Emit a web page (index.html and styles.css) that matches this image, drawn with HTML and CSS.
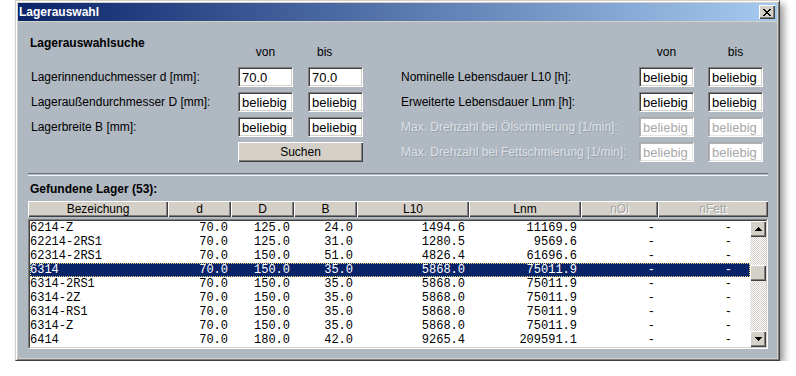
FILE: index.html
```html
<!DOCTYPE html>
<html lang="de">
<head>
    <meta charset="UTF-8">
    <title>Lagerauswahl</title>
    <link rel="stylesheet" href="styles.css">
</head>
<body>

<div class="window">
    <div class="titlebar">
        <span class="title">Lagerauswahl</span>
        <button class="close" title="Schließen">
            <svg width="8" height="7" viewBox="0 0 8 7"><path d="M0 0h2v1H0zM6 0h2v1H6zM1 1h2v1H1zM5 1h2v1H5zM2 2h4v1H2zM3 3h2v1H3zM2 4h4v1H2zM1 5h2v1H1zM5 5h2v1H5zM0 6h2v1H0zM6 6h2v1H6z" fill="#000"/></svg>
        </button>
    </div>

    <div class="content">
        <div class="search">
            <div class="pane pane-left">
                <div class="pane-head">
                    <h2 class="heading">Lagerauswahlsuche</h2>
                    <span class="colhead col-von">von</span>
                    <span class="colhead col-bis shift">bis</span>
                </div>
                <div class="pane-row">
                    <label>Lagerinnenduchmesser d [mm]:</label>
                    <input class="field" type="text" value="70.0">
                    <input class="field" type="text" value="70.0">
                </div>
                <div class="pane-row">
                    <label>Lageraußendurchmesser D [mm]:</label>
                    <input class="field" type="text" value="beliebig">
                    <input class="field" type="text" value="beliebig">
                </div>
                <div class="pane-row">
                    <label>Lagerbreite B [mm]:</label>
                    <input class="field" type="text" value="beliebig">
                    <input class="field" type="text" value="beliebig">
                </div>
                <div class="pane-row">
                    <span></span>
                    <button class="btn search-btn">Suchen</button>
                </div>
            </div>

            <div class="pane pane-right">
                <div class="pane-head">
                    <span class="colhead col-von">von</span>
                    <span class="colhead col-bis">bis</span>
                </div>
                <div class="pane-row">
                    <label>Nominelle Lebensdauer L10 [h]:</label>
                    <input class="field" type="text" value="beliebig">
                    <input class="field" type="text" value="beliebig">
                </div>
                <div class="pane-row">
                    <label>Erweiterte Lebensdauer Lnm [h]:</label>
                    <input class="field" type="text" value="beliebig">
                    <input class="field" type="text" value="beliebig">
                </div>
                <div class="pane-row disabled">
                    <label>Max. Drehzahl bei Ölschmierung [1/min]:</label>
                    <input class="field" type="text" value="beliebig" disabled>
                    <input class="field" type="text" value="beliebig" disabled>
                </div>
                <div class="pane-row disabled">
                    <label>Max. Drehzahl bei Fettschmierung [1/min]:</label>
                    <input class="field" type="text" value="beliebig" disabled>
                    <input class="field" type="text" value="beliebig" disabled>
                </div>
            </div>
        </div>

        <div class="separator"></div>

        <h2 class="heading result-heading">Gefundene Lager (53):</h2>

        <div class="table">
            <div class="thead">
                <div class="th">Bezeichung</div>
                <div class="th">d</div>
                <div class="th">D</div>
                <div class="th">B</div>
                <div class="th">L10</div>
                <div class="th">Lnm</div>
                <div class="th off">nÖl</div>
                <div class="th off">nFett</div>
            </div>
            <div class="list">
                <div class="list-inner">
                    <div class="rows">
                        <div class="tr"><span>6214-Z</span><span>70.0</span><span>125.0</span><span>24.0</span><span>1494.6</span><span>11169.9</span><span>-</span><span>-</span></div>
                        <div class="tr"><span>62214-2RS1</span><span>70.0</span><span>125.0</span><span>31.0</span><span>1280.5</span><span>9569.6</span><span>-</span><span>-</span></div>
                        <div class="tr"><span>62314-2RS1</span><span>70.0</span><span>150.0</span><span>51.0</span><span>4826.4</span><span>61696.6</span><span>-</span><span>-</span></div>
                        <div class="tr selected"><span>6314</span><span>70.0</span><span>150.0</span><span>35.0</span><span>5868.0</span><span>75011.9</span><span>-</span><span>-</span></div>
                        <div class="tr"><span>6314-2RS1</span><span>70.0</span><span>150.0</span><span>35.0</span><span>5868.0</span><span>75011.9</span><span>-</span><span>-</span></div>
                        <div class="tr"><span>6314-2Z</span><span>70.0</span><span>150.0</span><span>35.0</span><span>5868.0</span><span>75011.9</span><span>-</span><span>-</span></div>
                        <div class="tr"><span>6314-RS1</span><span>70.0</span><span>150.0</span><span>35.0</span><span>5868.0</span><span>75011.9</span><span>-</span><span>-</span></div>
                        <div class="tr"><span>6314-Z</span><span>70.0</span><span>150.0</span><span>35.0</span><span>5868.0</span><span>75011.9</span><span>-</span><span>-</span></div>
                        <div class="tr"><span>6414</span><span>70.0</span><span>180.0</span><span>42.0</span><span>9265.4</span><span>209591.1</span><span>-</span><span>-</span></div>
                    </div>
                    <div class="scrollbar">
                        <div class="sb-btn">
                            <svg width="7" height="4" viewBox="0 0 7 4"><path d="M3 0h1v1H3zM2 1h3v1H2zM1 2h5v1H1zM0 3h7v1H0z" fill="#000"/></svg>
                        </div>
                        <div class="sb-track sb-track-top"></div>
                        <div class="sb-thumb"></div>
                        <div class="sb-track sb-track-rest"></div>
                        <div class="sb-btn">
                            <svg width="7" height="4" viewBox="0 0 7 4"><path d="M0 0h7v1H0zM1 1h5v1H1zM2 2h3v1H2zM3 3h1v1H3z" fill="#000"/></svg>
                        </div>
                    </div>
                </div>
            </div>
        </div>
    </div>
</div>

</body>
</html>
```

FILE: styles.css
```css
body {
    margin: 0;
    background-color: #ffffff;
    font-family: 'Liberation Sans', Arial, sans-serif;
    font-size: 12px;
    color: #000;
}
.window {
    width: 765px;
    height: 361px;
    margin-left: 15px;
    box-sizing: border-box;
    border: 1px solid;
    border-color: #d4d0c8 #404040 #404040 #d4d0c8;
    background-color: #d4d0c8;
    box-shadow: inset 1px 1px #ffffff, inset -1px -1px #808080, 4px 4px 7px rgba(0, 0, 0, 0.4);
    padding: 2px;
    display: flex;
    flex-direction: column;
}
.titlebar {
    height: 18px;
    flex-shrink: 0;
    display: flex;
    align-items: center;
    justify-content: space-between;
    padding: 0 2px 0 1px;
    background: linear-gradient(to right, #0a246a, #a6caf0);
    margin-bottom: 1px;
}
.title {
    color: #ffffff;
    font-weight: bold;
    font-size: 12px;
}
.close {
    width: 16px;
    height: 14px;
    padding: 0;
    border: none;
    background-color: #d4d0c8;
    box-shadow: inset 1px 1px #ffffff, inset -1px -1px #404040, inset -2px -2px #808080;
    display: flex;
    align-items: center;
    justify-content: center;
}
.content {
    flex: 1;
    background-color: #b0b8c2;
    padding: 14px 9px 0 10px;
}

/* search area */
.search {
    display: flex;
    gap: 38px;
    padding-left: 3px;
}
.pane {
    display: flex;
    flex-direction: column;
    gap: 5px;
}
.pane-left {
    --cols: 192px 55px 55px;
    --gap: 15px;
}
.pane-right {
    --cols: 224px 55px 55px;
    --gap: 14px;
}
.pane-head, .pane-row {
    display: grid;
    grid-template-columns: var(--cols);
    column-gap: var(--gap);
}
.pane-head {
    height: 26px;
}
.pane-row {
    height: 20px;
    align-items: center;
}
.heading {
    margin: 0;
    font-size: 12px;
    font-weight: bold;
    line-height: 14px;
}
.pane-head .heading {
    grid-column: 1;
    margin-left: -1px;
    white-space: nowrap;
}
.colhead {
    grid-row: 1;
    align-self: end;
    margin-bottom: 3px;
    line-height: 14px;
    text-align: center;
}
.col-von {
    grid-column: 2;
}
.col-bis {
    grid-column: 3;
}
.colhead.shift {
    text-align: left;
    padding-left: 9px;
}
label {
    white-space: nowrap;
}
.field {
    width: 55px;
    height: 20px;
    box-sizing: border-box;
    margin: 0;
    padding: 0 0 0 3px;
    font-family: 'Liberation Sans', Arial, sans-serif;
    font-size: 13px;
    color: #000;
    background-color: #ffffff;
    border: 1px solid;
    border-color: #808080 #ffffff #ffffff #808080;
    box-shadow: inset 1px 1px #404040, inset -1px -1px #d4d0c8;
    outline: none;
}
.disabled label {
    color: #dde1e5;
    text-shadow: 1px 1px 0 rgba(130, 138, 148, 0.55);
}
.field:disabled {
    color: #a8a8a8;
    border-color: #a4a8ad #ffffff #ffffff #a4a8ad;
    box-shadow: inset 1px 1px #b4b4b4, inset -1px -1px #e4e4e4;
}
.btn {
    font-family: 'Liberation Sans', Arial, sans-serif;
    font-size: 12px;
    color: #000;
    background-color: #d4d0c8;
    border: none;
    padding: 0;
    box-shadow: inset 1px 1px #ffffff, inset -1px -1px #404040, inset -2px -2px #808080;
}
.search-btn {
    grid-column: 2 / 4;
    height: 20px;
}

.separator {
    margin-top: 11px;
    height: 1px;
    border-top: 1px solid #6e747b;
    border-bottom: 1px solid #f2f4f6;
}
.result-heading {
    margin: 6px 0 5px 2px;
}

/* result table */
.table {
    width: 740px;
}
.thead {
    display: grid;
    grid-template-columns: 140px 63px 63px 63px 112px 112px 77px 110px;
    height: 16px;
}
.th {
    background-color: #d4d0c8;
    box-shadow: inset 1px 1px #ffffff, inset -1px -1px #404040, inset -2px -2px #808080;
    text-align: center;
    line-height: 16px;
}
.th.off {
    color: #a4a4a4;
    text-shadow: 1px 1px 0 #ffffff;
}
.list {
    margin-top: 2px;
    border: 1px solid;
    border-color: #808080 #ffffff #ffffff #808080;
}
.list-inner {
    display: flex;
    border: 1px solid;
    border-color: #404040 #d4d0c8 #d4d0c8 #404040;
    background-color: #ffffff;
}
.rows {
    width: 720px;
}
.tr {
    display: grid;
    grid-template-columns: 138px 63px 63px 63px 112px 112px 77px 92px;
    height: 14px;
    line-height: 14px;
    font-family: 'Liberation Mono', 'Courier New', monospace;
    font-size: 12px;
    white-space: pre;
}
.tr span {
    text-align: right;
    padding-right: 4px;
}
.tr span:first-child {
    text-align: left;
    padding-left: 0;
}
.tr span:nth-child(2), .tr span:nth-child(7) {
    padding-right: 3px;
}
.tr span:nth-child(8) {
    padding-right: 18px;
}
.tr.selected {
    background-color: #0a246a;
    color: #ffffff;
    outline: 1px dotted #e8dc78;
    outline-offset: -1px;
}

.scrollbar {
    width: 16px;
    display: flex;
    flex-direction: column;
}
.sb-btn, .sb-thumb {
    height: 16px;
    flex-shrink: 0;
    background-color: #d4d0c8;
    box-shadow: inset 1px 1px #ffffff, inset -1px -1px #404040, inset -2px -2px #808080;
    display: flex;
    align-items: center;
    justify-content: center;
}
.sb-track {
    background: repeating-conic-gradient(#d4d0c8 0 25%, #ffffff 0 50%) 0 0 / 2px 2px;
}
.sb-track-top {
    height: 28px;
}
.sb-track-rest {
    flex: 1;
}
```
